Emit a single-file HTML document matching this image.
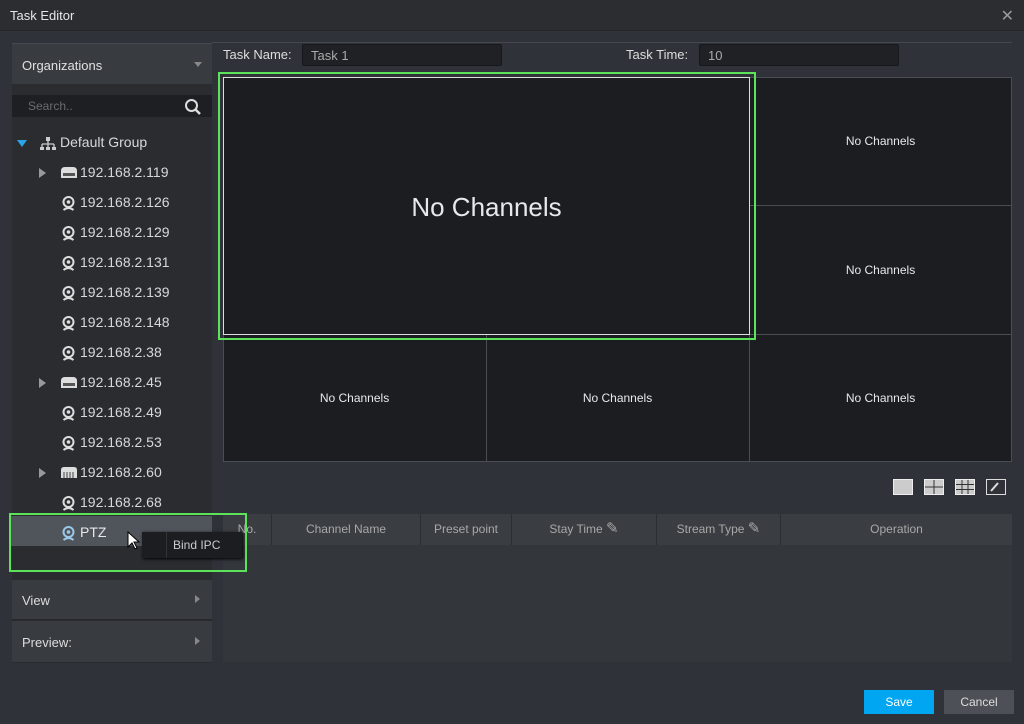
<!DOCTYPE html>
<html><head><style>
*{box-sizing:border-box;margin:0;padding:0}
body{width:1024px;height:724px;background:#2f3238;font-family:"Liberation Sans",sans-serif;position:relative;overflow:hidden;color:#d8d8d8}
.a{position:absolute}
.title{left:0;top:0;width:1024px;height:31px;background:#2b2d31;border-bottom:1px solid #24262a}
.title span{position:absolute;left:10px;top:8px;font-size:13px;color:#e6e6e6}
.close{right:10px;top:6px;font-size:16px;color:#999}
.lp{left:12px;top:43px;width:200px;height:620px;background:#2a2c30}
.org{left:12px;top:43px;width:200px;height:41px;background:#383b40;border-top:1px solid #45484d}
.org span{position:absolute;left:10px;top:14px;font-size:13px;color:#e0e0e0}
.tri{width:0;height:0;border-left:4px solid transparent;border-right:4px solid transparent;border-top:5px solid #888}
.search{left:12px;top:95px;width:200px;height:22px;background:#1e1f23}
.search span{position:absolute;left:16px;top:4px;font-size:12px;color:#6a6c70}
.it{position:absolute;font-size:14px;color:#d8d8d8;height:20px}
.rt{width:0;height:0;border-top:5px solid transparent;border-bottom:5px solid transparent;border-left:7px solid #999}
.grid{left:223px;top:77px;width:789px;height:385px;background:#1b1d21;border:1px solid #4a4d52}
.cell{position:absolute;font-size:12px;color:#e8e8e8;text-align:center}
.ln{position:absolute;background:#4a4d52}
.in{background:#1f2125;border:1px solid #17181b;border-radius:2px;height:22px;font-size:13px;color:#aaa;padding:3px 8px}
.th{left:223px;top:514px;width:789px;height:31px;background:#3a3d42}
.th div{position:absolute;top:0;height:31px;line-height:30px;font-size:12px;color:#a8a8a8;text-align:center;border-right:1px solid #2c2e33}
.tb{left:223px;top:545px;width:789px;height:117px;background:#33363b}
.btn{height:24px;font-size:12px;text-align:center;line-height:24px}
</style></head><body>
<div class="a title"><span>Task Editor</span></div>
<div class="a close">✕</div>
<div class="a lp"></div>
<div class="a org"><span>Organizations</span><div class="a tri" style="left:182px;top:18px"></div></div>
<div class="a search"><span>Search..</span>
<svg class="a" style="left:172px;top:3px" width="18" height="17"><circle cx="7.5" cy="7.5" r="5.5" stroke="#ddd" stroke-width="2" fill="none"/><line x1="11.5" y1="11.5" x2="16" y2="16" stroke="#ddd" stroke-width="2.5"/></svg></div>
<div class="a" style="left:17px;top:140px;width:0;height:0;border-left:5px solid transparent;border-right:5px solid transparent;border-top:7px solid #2aa6e8"></div>
<svg class="a" style="left:40px;top:136px" width="16" height="15"><rect x="6" y="1" width="4" height="4" fill="#ccc"/><path d="M8 5v3M2 8h12M2 8v3M8 8v3M14 8v3" stroke="#ccc" stroke-width="1.3"/><rect x="0" y="11" width="4" height="3" fill="#ccc"/><rect x="6" y="11" width="4" height="3" fill="#ccc"/><rect x="12" y="11" width="4" height="3" fill="#ccc"/></svg>
<div class="it" style="left:60px;top:134px">Default Group</div>
<div class="a" style="left:10px;top:516px;width:202px;height:30px;background:#50545b"></div>
<div class="a" style="left:12px;top:580px;width:200px;height:40px;background:#383b40;border-bottom:1px solid #25272a"><span class="a" style="left:10px;top:13px;font-size:13px;color:#ddd">View</span><div class="a rt" style="left:183px;top:15px;border-left-color:#888;border-top-width:4px;border-bottom-width:4px;border-left-width:5px"></div></div>
<div class="a" style="left:12px;top:621px;width:200px;height:41px;background:#383b40"><span class="a" style="left:10px;top:14px;font-size:13px;color:#ddd">Preview:</span><div class="a rt" style="left:183px;top:16px;border-left-color:#888;border-top-width:4px;border-bottom-width:4px;border-left-width:5px"></div></div>

<div class="a" style="left:223px;top:47px;font-size:13px;color:#ddd">Task Name:</div>
<div class="a in" style="left:302px;top:44px;width:200px">Task 1</div>
<div class="a" style="left:626px;top:47px;font-size:13px;color:#ddd">Task Time:</div>
<div class="a in" style="left:699px;top:44px;width:200px">10</div>
<div class="a" style="left:212px;top:42px;width:800px;height:1px;background:#45484d"></div>

<div class="a grid"></div>
<div class="ln" style="left:749px;top:205px;width:263px;height:1px"></div>
<div class="ln" style="left:223px;top:334px;width:789px;height:1px"></div>
<div class="ln" style="left:749px;top:77px;width:1px;height:385px"></div>
<div class="ln" style="left:486px;top:334px;width:1px;height:128px"></div>
<div class="a" style="left:223px;top:77px;width:527px;height:258px;border:1px solid #ddd;background:#1b1d21"></div>
<div class="a" style="left:218px;top:72px;width:538px;height:268px;border:2px solid #5de35a"></div>
<div class="cell" style="left:223px;top:192px;width:527px;font-size:26px">No Channels</div>
<div class="cell" style="left:749px;top:134px;width:263px">No Channels</div>
<div class="cell" style="left:749px;top:263px;width:263px">No Channels</div>
<div class="cell" style="left:223px;top:391px;width:263px">No Channels</div>
<div class="cell" style="left:486px;top:391px;width:263px">No Channels</div>
<div class="cell" style="left:749px;top:391px;width:263px">No Channels</div>

<svg class="a" style="left:892px;top:478px" width="118" height="19">
<rect x="1.5" y="1.5" width="19" height="15" fill="#ccc" stroke="#eee"/>
<rect x="32.5" y="1.5" width="19" height="15" fill="#ccc" stroke="#eee"/><path d="M42 2v14M33 9h18" stroke="#333"/>
<rect x="63.5" y="1.5" width="19" height="15" fill="#ccc" stroke="#eee"/><path d="M70 2v14M76 2v14M64 6.5h18M64 11.5h18" stroke="#333"/>
<rect x="94.5" y="1.5" width="19" height="15" fill="none" stroke="#ddd"/><path d="M99 13l7-8" stroke="#ddd" stroke-width="2"/>
</svg>
<div class="a th">
<div style="left:0;width:49px">No.</div>
<div style="left:49px;width:149px">Channel Name</div>
<div style="left:198px;width:91px">Preset point</div>
<div style="left:289px;width:145px">Stay Time <span style="font-size:15px">✎</span></div>
<div style="left:434px;width:124px">Stream Type <span style="font-size:15px">✎</span></div>
<div style="left:558px;width:231px;border:none">Operation</div>
</div>
<div class="a tb"></div>
<div class="a btn" style="left:864px;top:690px;width:70px;background:#00a6f2;color:#fff">Save</div>
<div class="a btn" style="left:944px;top:690px;width:70px;background:#4d5157;color:#ddd">Cancel</div>

<div id="tree"></div>
<div class="a" style="left:9px;top:513px;width:238px;height:59px;border:2px solid #5de35a"></div>
<div class="a" style="left:142px;top:532px;width:100px;height:26px;background:#1c1d20;box-shadow:1px 1px 3px #000"><div class="a" style="left:24px;top:0;width:1px;height:26px;background:#333"></div><span class="a" style="left:31px;top:6px;font-size:12px;color:#ccc">Bind IPC</span></div>
<svg class="a" style="left:127px;top:531px" width="14" height="20"><path d="M1 1v15l4-4 3 6 2-1-3-6h5z" fill="#fff" stroke="#000" stroke-width="1"/></svg>
<script>
var items=[[1,"192.168.2.119"],[0,"192.168.2.126"],[0,"192.168.2.129"],[0,"192.168.2.131"],[0,"192.168.2.139"],[0,"192.168.2.148"],[0,"192.168.2.38"],[1,"192.168.2.45"],[0,"192.168.2.49"],[0,"192.168.2.53"],[2,"192.168.2.60"],[0,"192.168.2.68"],[3,"PTZ"]];
var h="";
items.forEach(function(it,i){var y=164+i*30;
if(it[0]==1||it[0]==2)h+='<div class="a rt" style="left:39px;top:'+(y+4)+'px"></div>';
if(it[0]==1)h+='<svg class="a" style="left:61px;top:'+(y+3)+'px" width="16" height="11"><path d="M0 4q0-4 4-4h8q4 0 4 4v7H0z" fill="#ddd"/><rect x="2" y="6" width="12" height="3" fill="#555"/></svg>';
else if(it[0]==2)h+='<svg class="a" style="left:61px;top:'+(y+3)+'px" width="16" height="11"><path d="M0 3q0-3 3-3h10q3 0 3 3v8H0z" fill="#ddd"/><path d="M3 5v6M6 5v6M9 5v6M12 5v6" stroke="#444"/></svg>';
else {var c=it[0]==3?"#9cc8e8":"#ddd";h+='<svg class="a" style="left:62px;top:'+(y+2)+'px" width="13" height="16"><circle cx="6.5" cy="6" r="5" fill="none" stroke="'+c+'" stroke-width="2"/><circle cx="6.5" cy="6" r="1.8" fill="'+c+'"/><path d="M1.5 14q5-4 10 0" stroke="'+c+'" stroke-width="2" fill="none"/></svg>';}
h+='<div class="it" style="left:80px;top:'+y+'px;'+(it[0]==3?'color:#e8e8e8':'')+'">'+it[1]+'</div>';});
document.getElementById("tree").innerHTML=h;
</script>
</body></html>
